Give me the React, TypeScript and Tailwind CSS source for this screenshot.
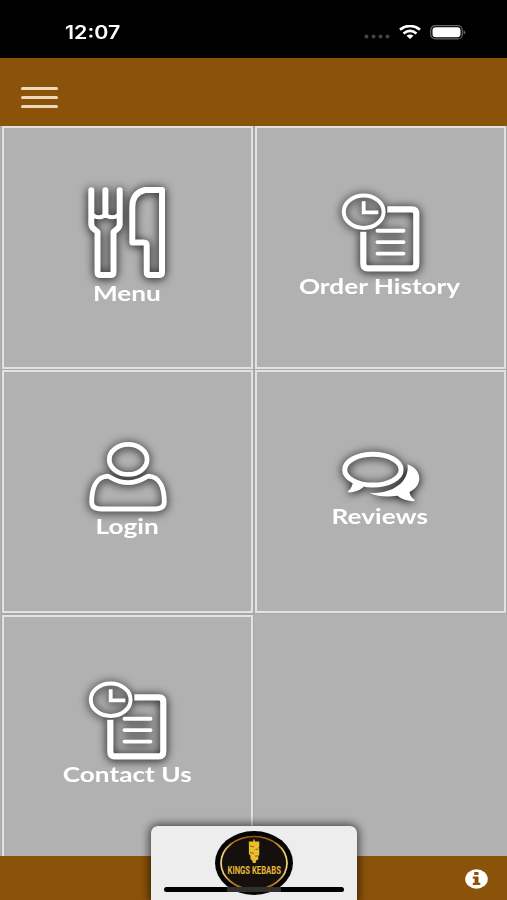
import type { ReactNode } from 'react';

const glow = 'overflow-visible drop-shadow-[0_1px_5px_rgba(0,0,0,1)]';

function CutleryIcon() {
    return (
        <svg width="80" height="92" viewBox="0 0 80 92" fill="none" stroke="white" strokeWidth="6" strokeLinecap="round" strokeLinejoin="round" className={glow}>
            <path d="M4.3 4.3V38Q4.3 41 7 43L10.5 46V86Q10.5 89 13.5 89H23.5Q26.5 89 26.5 86V46L30 43Q32.7 41 32.7 38V4.3" />
            <path d="M18.4 4.3V29" />
            <path d="M4.3 28Q11 34 18.4 29Q26 34 32.7 28" strokeWidth="4" />
            <path d="M58 4H75V86Q75 89 72 89H62.7Q59.7 89 59.7 86V59.5Q59.7 56.5 56.7 56.5H45.3V21Q45.3 7 58 4Z" />
        </svg>
    );
}

function OrderIcon() {
    return (
        <svg width="78" height="78" viewBox="0 0 78 78" fill="none" stroke="white" className={glow}>
            <ellipse cx="21.7" cy="17.7" rx="19.9" ry="16.2" strokeWidth="4" />
            <path d="M21.7 7.3V18.3H36.3" strokeWidth="3.8" />
            <path d="M45.3 15.4H70Q74.3 15.4 74.3 20V69.5Q74.3 74.3 70 74.3H25.5Q21.3 74.3 21.3 69.5V37.7" strokeWidth="6.2" />
            <path d="M35.5 36.7H61.5M35.5 48.1H61.5M35.5 59.6H61.5" strokeWidth="3.9" strokeLinecap="round" />
        </svg>
    );
}

function UserIcon() {
    return (
        <svg width="78" height="70" viewBox="0 0 78 70" fill="none" stroke="white" strokeWidth="4.8" className={glow}>
            <ellipse cx="39.2" cy="17.4" rx="18.9" ry="15" />
            <path d="M18.5 34.1C6.5 35 2.7 47 2.7 60Q2.7 67 12.500 67H65.500Q75.300 67 75.300 60C75.300 47 71.500 35 59.800 34.1C56.500 34.3 51.500 40.6 39.200 40.6C26.500 40.6 21.500 34.3 18.500 34.1Z" strokeLinejoin="round" />
        </svg>
    );
}

function ChatIcon() {
    return (
        <svg width="78" height="51" viewBox="0 0 78 51" fill="none" className={glow}>
            <ellipse cx="30.9" cy="18.7" rx="28.2" ry="15.4" stroke="white" strokeWidth="5" />
            <path d="M11 30.5Q10 37.5 5.7 40.5Q7 42 11 41Q17 40 21.5 36L18 31.5Z" fill="white" />
            <path d="M65.5 13.3C73 16 77.3 21.5 77.3 27.3C77.3 33 74 37.8 67.5 41C68 45 70.5 47.5 72.8 49Q73 50.5 69 50C63 49.5 59 47.5 55.5 44.8C45 46.5 34.5 45.3 28 42C49 43 68 32 65.5 13.3Z" fill="white" />
        </svg>
    );
}

function Tile({ label, children, className = '' }: { label: string; children: ReactNode; className?: string }) {
    return (
        <button className={`flex h-[243px] w-[251px] shrink-0 flex-col items-center border-2 border-[#e2e2e2] text-white outline outline-1 outline-[#a8a8a8] ${className}`}>
            {children}
            <span className="mr-px scale-x-[1.31] text-[20px] leading-5 font-bold whitespace-nowrap">{label}</span>
        </button>
    );
}

function StatusBar() {
    return (
        <div className="flex h-[58px] shrink-0 items-center justify-between bg-black pt-[6px] pr-[41px] pl-[65px] text-white">
            <span className="origin-left scale-x-[1.19] pt-px font-['Inter',sans-serif] text-[18px] leading-none font-semibold">12:07</span>
            <div className="flex items-center">
                <svg width="26" height="6" viewBox="0 0 26 6" fill="#444" className="mt-[9px] mr-[9px]">
                    <circle cx="2.5" cy="2.5" r="2" />
                    <circle cx="9.5" cy="2.5" r="2" />
                    <circle cx="16.5" cy="2.5" r="2" />
                    <circle cx="23.5" cy="2.5" r="2" />
                </svg>
                <svg width="22" height="14" viewBox="0 0 22 14" fill="none" stroke="white" strokeWidth="2.7" className="mr-[9px]">
                    <path d="M1 4.7Q11-2.8 21 4.7" />
                    <path d="M4.5 8.5Q11 3.3 17.5 8.5" />
                    <path d="M7.5 10.8Q11 8 14.5 10.8L11 14Z" fill="white" stroke="none" />
                </svg>
                <svg width="36" height="15" viewBox="0 0 36 15">
                    <rect x="0.7" y="0.7" width="31.6" height="13.2" rx="4.5" fill="none" stroke="#686868" strokeWidth="1.2" />
                    <rect x="2.5" y="2.3" width="28" height="10" rx="3.3" fill="white" />
                    <path d="M33.7 5.2Q35.3 6 35.3 7.4T33.7 9.6Z" fill="#686868" />
                </svg>
            </div>
        </div>
    );
}

function Logo() {
    return (
        <svg width="78" height="64" viewBox="0 0 78 64">
            <defs>
                <linearGradient id="ring" x1="0" x2="1" y1="0" y2="0">
                    <stop offset="0" stopColor="#f6dc86" />
                    <stop offset="0.18" stopColor="#b8761a" />
                    <stop offset="0.5" stopColor="#8c5310" />
                    <stop offset="0.82" stopColor="#b8761a" />
                    <stop offset="1" stopColor="#f6dc86" />
                </linearGradient>
            </defs>
            <ellipse cx="39" cy="32" rx="39" ry="32" fill="#050403" />
            <ellipse cx="39" cy="32" rx="33" ry="26.5" fill="#15100e" stroke="url(#ring)" strokeWidth="1.7" />
            <path d="M38.4 8.500h1.400v2h4.500v5l-.6 1 .6 1v6l-1 2v3l-2.2 1-.5 2.500h-2.700l-.7-2.500-1.800-1.500v-3.500l-1.500-1.500v-12.500h4.500Z" fill="#ecbd2e" />
            <path d="M35 15l4 1M40.5 18.5l3-.5M35 21.5l4 1M40 25h3" stroke="#5a3d0a" strokeWidth="0.7" />
            <text transform="translate(39.2 42.6) scale(0.7 1)" textAnchor="middle" fill="#e6b838" className="font-['Roboto',sans-serif] text-[11px] font-bold">KINGS KEBABS</text>
        </svg>
    );
}

export default function App() {
    return (
        <div className="relative flex h-[900px] w-[507px] flex-col overflow-hidden bg-[#b1b1b1] font-['Lato',sans-serif]">
            <StatusBar />
            <header className="flex h-[68px] shrink-0 items-center bg-[#8b530a] pt-[11px] pl-[21px]">
                <button className="flex flex-col gap-[6px]">
                    <span className="h-[3px] w-[37px] rounded-full bg-[#ecd9bb]" />
                    <span className="h-[3px] w-[37px] rounded-full bg-[#ecd9bb]" />
                    <span className="h-[3px] w-[37px] rounded-full bg-[#ecd9bb]" />
                </button>
            </header>

            <main className="grid h-[730px] shrink-0 grid-cols-[251px_251px] content-start gap-x-[2px] gap-y-[1.4px] overflow-hidden pl-[2px]">
                <Tile label="Menu" className="pt-[58px] pr-px">
                    <CutleryIcon />
                    <span className="h-[5px]" />
                </Tile>
                <Tile label="Order History" className="pt-[66px]">
                    <OrderIcon />
                    <span className="h-[4px]" />
                </Tile>
                <Tile label="Login" className="pt-[70px]">
                    <UserIcon />
                    <span className="h-[4px]" />
                </Tile>
                <Tile label="Reviews" className="pt-[79px]">
                    <ChatIcon />
                    <span className="h-[4px]" />
                </Tile>
                <Tile label="Contact Us" className="pt-[65px]">
                    <OrderIcon />
                    <span className="h-[4px]" />
                </Tile>
            </main>

            <footer className="flex h-[44px] shrink-0 items-center justify-end bg-[#8b530a] pr-[19px]">
                <svg width="23" height="20" viewBox="0 0 23 20" className="mt-px">
                    <ellipse cx="11.5" cy="10" rx="11.3" ry="9.7" fill="white" />
                    <path d="M9.2 3h4.3v3H9.2ZM7.8 7.5h5.7v6.2h1.8V16H7.8v-2.3h1.8V9.8H7.8Z" fill="#8b530a" />
                </svg>
            </footer>

            {/* pull-up card over the footer */}
            <div className="absolute bottom-0 left-[151px] flex h-[74px] w-[206px] justify-center rounded-t-[7px] bg-[#ededed] pt-[5px] shadow-[0_0_9px_2px_rgba(0,0,0,0.6)]">
                <Logo />
                <div className="absolute top-[60.5px] left-[13px] h-[5px] w-[180px] rounded-full bg-black" />
                <div className="absolute top-[60.5px] left-[76px] h-[5px] w-[54px] bg-[#303030]" />
            </div>
        </div>
    );
}
